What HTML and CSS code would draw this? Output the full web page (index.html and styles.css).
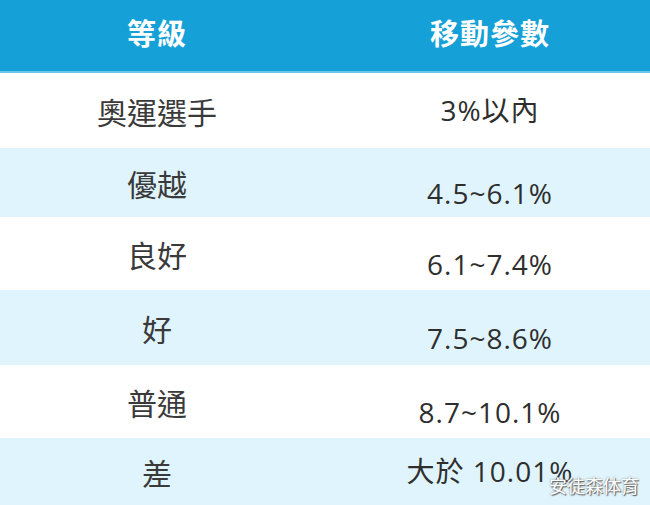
FILE: index.html
```html
<!DOCTYPE html>
<html lang="zh-Hant">
<head>
<meta charset="utf-8">
<link rel="stylesheet" href="styles.css">
</head>
<body>
<div class="table">
  <div class="row head">
    <div class="cell c1">等級</div>
    <div class="cell c2">移動參數</div>
  </div>
  <div class="row">
    <div class="cell c1">奧運選手</div>
    <div class="cell c2 num">3%以內</div>
  </div>
  <div class="row alt">
    <div class="cell c1">優越</div>
    <div class="cell c2 num low">4.5~6.1%</div>
  </div>
  <div class="row">
    <div class="cell c1">良好</div>
    <div class="cell c2 num low">6.1~7.4%</div>
  </div>
  <div class="row alt">
    <div class="cell c1">好</div>
    <div class="cell c2 num low">7.5~8.6%</div>
  </div>
  <div class="row">
    <div class="cell c1">普通</div>
    <div class="cell c2 num low">8.7~10.1%</div>
  </div>
  <div class="row alt">
    <div class="cell c1">差</div>
    <div class="cell c2 num">大於 10.01%</div>
  </div>
  <div class="mark">安徒森体育</div>
</div>
</body>
</html>
```
FILE: styles.css
```css
html, body {
  margin: 0;
  padding: 0;
  background: #ffffff;
}
.table {
  position: relative;
  width: 650px;
  height: 505px;
  display: grid;
  grid-template-rows: 73px 75px 69px 73px 75px 73px 1fr;
  overflow: hidden;
  font-family: "Noto Sans CJK TC", "Noto Sans", sans-serif;
  color: #3a3a3a;
}
.row {
  display: grid;
  grid-template-columns: 314px 1fr;
}
.row.alt {
  background: #dff4fc;
}
.row.head {
  background: #15a0d8;
  border-bottom: 2px solid #6cc6ea;
  color: #ffffff;
}
.cell {
  display: flex;
  align-items: center;
  justify-content: center;
  font-size: 30px;
  line-height: 1.2;
  white-space: nowrap;
}
.head .cell {
  font-size: 29px;
  font-weight: 700;
  padding-bottom: 6px;
  letter-spacing: 1px;
}
.c2 {
  padding-left: 16px;
}
.num {
  font-family: "Open Sans", "Noto Sans CJK TC", sans-serif;
  font-size: 28px;
  letter-spacing: 1px;
  color: #2e2e2e;
}
.low {
  padding-top: 22px;
}
.mark {
  position: absolute;
  right: 11px;
  bottom: 11px;
  font-size: 18px;
  line-height: 1;
  color: #ffffff;
  text-shadow: 0 0 2px #777, 1px 1px 1px #555;
}
```
